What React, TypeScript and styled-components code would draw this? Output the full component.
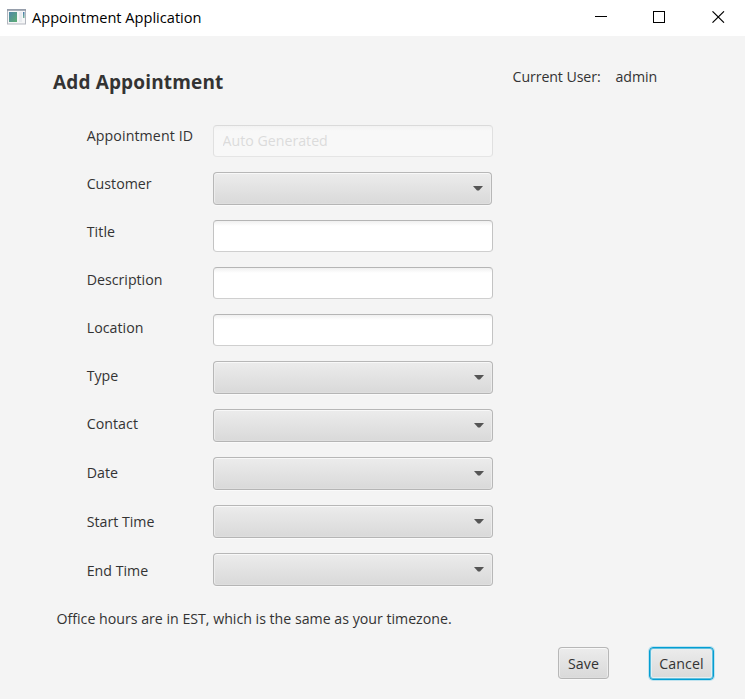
import React from 'react';
import styled, { createGlobalStyle, css } from 'styled-components';

const GlobalStyle = createGlobalStyle`
  *, *::before, *::after { box-sizing: border-box; }
  body { margin: 0; background: #f4f4f4; }
`;

const Window = styled.div`
  width: 745px;
  height: 699px;
  display: flex;
  flex-direction: column;
  overflow: hidden;
  background: #f4f4f4;
  color: #333;
  font-family: 'Open Sans', 'Noto Sans', sans-serif;
  font-size: 14.2px;
  line-height: 20px;
  white-space: nowrap;
`;

const TitleBar = styled.header`
  display: flex;
  align-items: center;
  flex: none;
  height: 36px;
  padding: 0 20px 2px 7px;
  background: #fff;
  color: #000;
`;

const WindowTitle = styled.span`
  flex: 1;
  padding: 0 0 1px 6px;
  font-size: 14.6px;
`;

const WindowControls = styled.div`
  display: flex;
  gap: 46px;
  svg { display: block; }
  svg:last-child { margin-left: 1px; }
`;

const Header = styled.div`
  display: flex;
  justify-content: space-between;
  flex: none;
  height: 76px;
  padding: 31px 88px 0 53px;
`;

const Heading = styled.h1`
  margin: 0;
  font-size: 19px;
  font-weight: 700;
  line-height: 30px;
  letter-spacing: 0.15px;
`;

const UserInfo = styled.div`
  display: flex;
  gap: 15px;
  letter-spacing: -0.1px;
`;

const Form = styled.form`
  display: flex;
  flex: none;
  height: 487px;
  padding-left: 86px;
`;

const Labels = styled.div`
  display: flex;
  flex-direction: column;
  width: 127px;
  padding-left: 0.7px;
`;

const Label = styled.label<{ $tall?: boolean; $spacing?: number }>`
  display: flex;
  align-items: center;
  height: ${(p) => (p.$tall ? 49 : 48)}px;
  letter-spacing: ${(p) => p.$spacing ?? 0}px;
`;

const Controls = styled.div`
  display: flex;
  flex-direction: column;
  gap: 15px;
  width: 280px;
  padding-top: 13px;
`;

const TextField = styled.input`
  display: block;
  width: 280px;
  height: 32px;
  padding: 0 9px 2px 8.5px;
  border: 1px solid;
  border-color: #b5b5b5 #c3c3c3 #cfcfcf;
  border-radius: 4px;
  outline: none;
  background: linear-gradient(#f0f0f0, #fff 5px);
  color: #333;
  font: inherit;

  &::placeholder { color: #b8b8b8; opacity: 1; }
  &:disabled { opacity: 0.4; }
`;

const raised = css`
  border: 1px solid;
  border-color: #b7b7b7 #b7b7b7 #b5b5b5;
  border-radius: 4px;
  background: linear-gradient(#ececec, #d9d9d9);
  box-shadow: inset 0 1px #f8f8f8, inset 1px 0 #ececec, inset -1px 0 #ececec,
    inset 0 -1px #dedede, 0 1px #fafafa;
`;

const ComboBox = styled.button<{ $narrow?: boolean }>`
  ${raised}
  display: flex;
  align-items: center;
  justify-content: flex-end;
  width: ${(p) => (p.$narrow ? 279 : 280)}px;
  height: 33px;
  padding: 0 8px 0 0;
`;

const Note = styled.p`
  flex: none;
  height: 48px;
  margin: 0;
  padding: 10px 0 0 56.5px;
  letter-spacing: -0.01px;
`;

const Actions = styled.div`
  display: flex;
  gap: 40px;
  padding-left: 558px;
`;

const ActionButton = styled.button<{ $focused?: boolean }>`
  ${raised}
  width: ${(p) => (p.$focused ? 65 : 51)}px;
  height: ${(p) => (p.$focused ? 33 : 32)}px;
  padding: ${(p) => (p.$focused ? 0 : '2px 0 0')};
  color: #333;
  font: inherit;
  letter-spacing: 0.1px;
  ${(p) =>
    p.$focused &&
    css`
      border: 1px solid #039ed3;
      box-shadow: inset 0 0 0 1px #62bfdd, inset 0 0 0 2px #e5eff2,
        0 0 0 1px #bfe3ef;
    `}
`;

const AppIcon = () => (
  <svg width="19" height="16" viewBox="0 0 19 16">
    <defs>
      <linearGradient id="pane" x1="0" y1="0" x2="1" y2="1">
        <stop offset="0" stopColor="#4f86a8" />
        <stop offset="1" stopColor="#5dae72" />
      </linearGradient>
      <linearGradient id="strip" x1="0" y1="0" x2="0" y2="1">
        <stop offset="0" stopColor="#4777ad" />
        <stop offset="1" stopColor="#74b595" />
      </linearGradient>
    </defs>
    <rect x="0.5" y="0.5" width="18" height="14.5" fill="#f5f6f7" stroke="#b3b7bf" />
    <path d="M0 1h19" stroke="#8d96a5" strokeWidth="1.5" />
    <rect x="2" y="3" width="8" height="10" fill="url(#pane)" />
    <path d="M12 3h3v10h-3z" fill="#e8ebef" />
    <rect x="16" y="3" width="1.5" height="6" fill="url(#strip)" />
  </svg>
);

const MinimizeIcon = () => (
  <svg width="12" height="12" shapeRendering="crispEdges">
    <path d="M0 5.5h12" stroke="#000" />
  </svg>
);

const MaximizeIcon = () => (
  <svg width="12" height="12" shapeRendering="crispEdges">
    <rect x="0.5" y="0.5" width="11" height="11" fill="none" stroke="#000" />
  </svg>
);

const CloseIcon = () => (
  <svg width="13" height="12">
    <path d="M0.5 0.3L12 11.7M12 0.3L0.5 11.7" stroke="#000" strokeWidth="1.1" />
  </svg>
);

const Arrow = () => (
  <svg width="10" height="5">
    <path d="M0 0h10L6 4.5H4z" fill="#555" />
  </svg>
);

type Field = {
  label: string;
  kind: 'text' | 'combo';
  placeholder?: string;
  tall?: boolean;
  narrow?: boolean;
  spacing?: number;
};

const fields: Field[] = [
  { label: 'Appointment ID', kind: 'text', placeholder: 'Auto Generated', spacing: 0.1 },
  { label: 'Customer', kind: 'combo', narrow: true },
  { label: 'Title', kind: 'text', spacing: 0.1 },
  { label: 'Description', kind: 'text' },
  { label: 'Location', kind: 'text', spacing: 0.05 },
  { label: 'Type', kind: 'combo' },
  { label: 'Contact', kind: 'combo', spacing: 0.05 },
  { label: 'Date', kind: 'combo', tall: true, spacing: 0.05 },
  { label: 'Start Time', kind: 'combo', tall: true },
  { label: 'End Time', kind: 'combo', tall: true },
];

export default function App() {
  return (
    <Window>
      <GlobalStyle />
      <TitleBar>
        <AppIcon />
        <WindowTitle>Appointment Application</WindowTitle>
        <WindowControls>
          <MinimizeIcon />
          <MaximizeIcon />
          <CloseIcon />
        </WindowControls>
      </TitleBar>
      <Header>
        <Heading>Add Appointment</Heading>
        <UserInfo>
          <span>Current User:</span>
          <span>admin</span>
        </UserInfo>
      </Header>
      <Form>
        <Labels>
          {fields.map((f) => (
            <Label key={f.label} $tall={f.tall} $spacing={f.spacing}>
              {f.label}
            </Label>
          ))}
        </Labels>
        <Controls>
          {fields.map((f) =>
            f.kind === 'text' ? (
              <TextField key={f.label} aria-label={f.label} placeholder={f.placeholder} disabled={!!f.placeholder} />
            ) : (
              <ComboBox key={f.label} type="button" aria-label={f.label} $narrow={f.narrow}>
                <Arrow />
              </ComboBox>
            ),
          )}
        </Controls>
      </Form>
      <Note>Office hours are in EST, which is the same as your timezone.</Note>
      <Actions>
        <ActionButton>Save</ActionButton>
        <ActionButton $focused>Cancel</ActionButton>
      </Actions>
    </Window>
  );
}
